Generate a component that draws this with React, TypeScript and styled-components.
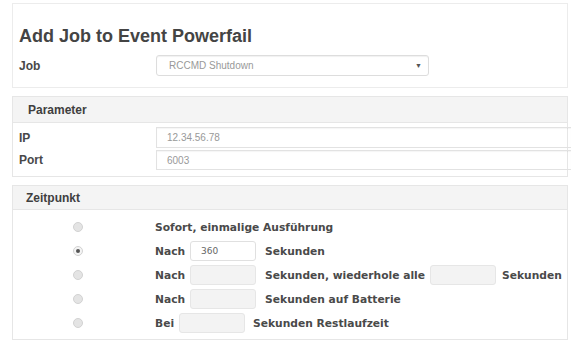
import React from 'react';
import styled, { createGlobalStyle } from 'styled-components';

const GlobalStyle = createGlobalStyle`
  html, body {
    margin: 0;
    padding: 0;
    background: #fff;
  }
  body {
    font-family: "Liberation Sans", Arial, sans-serif;
    color: #444;
    overflow: hidden;
  }
`;

const Page = styled.div`
  width: 573px;
  height: 343px;
  padding: 3px 3px 0 12px;
  box-sizing: border-box;
  display: flex;
  flex-direction: column;
  gap: 8px;
`;

const HeadCard = styled.div`
  border: 1px solid #ececec;
  padding: 21px 0 11px 6px;
  margin-right: 2px;
  display: flex;
  flex-direction: column;
  gap: 8px;
`;

const Title = styled.h1`
  margin: 0;
  font-size: 18px;
  font-weight: bold;
  color: #444;
  line-height: 22px;
`;

const FieldRow = styled.div<{ $h?: number }>`
  display: flex;
  align-items: center;
  height: ${(p) => p.$h ?? 21}px;
`;

const Label = styled.div`
  width: 137px;
  font-size: 12px;
  font-weight: bold;
  color: #484848;
`;

const Select = styled.div`
  width: 273px;
  height: 21px;
  box-sizing: border-box;
  border: 1px solid #ddd;
  border-radius: 3px;
  box-shadow: inset 0 1px 1px rgba(0, 0, 0, 0.06);
  display: flex;
  align-items: center;
  justify-content: space-between;
  padding: 0 6px 0 12px;
  font-size: 10px;
  color: #999;
`;

const Caret = styled.span`
  font-size: 7px;
  color: #555;
`;

const Panel = styled.div`
  border: 1px solid #e6e6e6;
  margin-right: 2px;
`;

const PanelHead = styled.div<{ $pl?: number; $h?: number }>`
  height: ${(p) => p.$h ?? 25}px;
  background: #f4f4f4;
  border-bottom: 1px solid #e6e6e6;
  display: flex;
  align-items: center;
  padding-left: ${(p) => p.$pl ?? 15}px;
  font-size: 12px;
  font-weight: bold;
  color: #3f3f3f;
`;

const ParamBody = styled.div`
  padding: 4px 0 6px 6px;
  display: flex;
  flex-direction: column;
  gap: 2px;
`;

const TextInput = styled.div`
  flex: 1;
  height: 100%;
  box-sizing: border-box;
  border: 1px solid #e2e2e2;
  border-right: none;
  margin-right: -4px;
  box-shadow: inset 0 1px 1px rgba(0, 0, 0, 0.04);
  display: flex;
  align-items: center;
  padding-left: 10px;
  font-size: 10px;
  color: #999;
`;

const TimeBody = styled.div`
  padding: 5px 0 4px 0;
  display: flex;
  flex-direction: column;
`;

const TimeRow = styled.div`
  display: flex;
  align-items: center;
  height: 24px;
  font-family: "DejaVu Sans", Verdana, sans-serif;
  font-size: 10.7px;
  font-weight: bold;
  color: #4a4a4a;
  white-space: nowrap;
`;

const RadioCell = styled.div`
  width: 142px;
  display: flex;
  padding-left: 60px;
  box-sizing: border-box;
`;

const Radio = styled.span<{ $checked?: boolean }>`
  width: 10px;
  height: 10px;
  border-radius: 50%;
  box-sizing: border-box;
  border: 1px solid #d2d2d2;
  background: ${(p) => (p.$checked ? '#f4f4f4' : '#e4e4e4')};
  display: flex;
  align-items: center;
  justify-content: center;
  &::after {
    content: '';
    width: 4px;
    height: 4px;
    border-radius: 50%;
    background: ${(p) => (p.$checked ? '#555' : 'transparent')};
  }
`;

const Seconds = styled.div<{ $filled?: boolean; $mr?: number }>`
  width: 66px;
  height: 20px;
  box-sizing: border-box;
  border: 1px solid ${(p) => (p.$filled ? '#e0e0e0' : '#e6e6e6')};
  border-radius: 3px;
  background: ${(p) => (p.$filled ? '#fff' : '#f3f3f3')};
  margin: 0 ${(p) => p.$mr ?? 9}px 0 5px;
  display: flex;
  align-items: center;
  padding-left: 10px;
  font-size: 9px;
  font-weight: normal;
  color: #666;
`;

export default function App() {
  return (
    <>
      <GlobalStyle />
      <Page>
        <HeadCard>
          <Title>Add Job to Event Powerfail</Title>
          <FieldRow>
            <Label>Job</Label>
            <Select>
              RCCMD Shutdown
              <Caret>▼</Caret>
            </Select>
          </FieldRow>
        </HeadCard>

        <Panel>
          <PanelHead>Parameter</PanelHead>
          <ParamBody>
            <FieldRow $h={21}>
              <Label>IP</Label>
              <TextInput>12.34.56.78</TextInput>
            </FieldRow>
            <FieldRow $h={20}>
              <Label>Port</Label>
              <TextInput>6003</TextInput>
            </FieldRow>
          </ParamBody>
        </Panel>

        <Panel>
          <PanelHead $pl={13} $h={23}>Zeitpunkt</PanelHead>
          <TimeBody>
            <TimeRow>
              <RadioCell><Radio /></RadioCell>
              Sofort, einmalige Ausführung
            </TimeRow>
            <TimeRow>
              <RadioCell><Radio $checked /></RadioCell>
              Nach
              <Seconds $filled>360</Seconds>
              Sekunden
            </TimeRow>
            <TimeRow>
              <RadioCell><Radio /></RadioCell>
              Nach
              <Seconds />
              Sekunden, wiederhole alle
              <Seconds $mr={6} />
              Sekunden
            </TimeRow>
            <TimeRow>
              <RadioCell><Radio /></RadioCell>
              Nach
              <Seconds />
              Sekunden auf Batterie
            </TimeRow>
            <TimeRow>
              <RadioCell><Radio /></RadioCell>
              Bei
              <Seconds $mr={8} />
              Sekunden Restlaufzeit
            </TimeRow>
          </TimeBody>
        </Panel>
      </Page>
    </>
  );
}
